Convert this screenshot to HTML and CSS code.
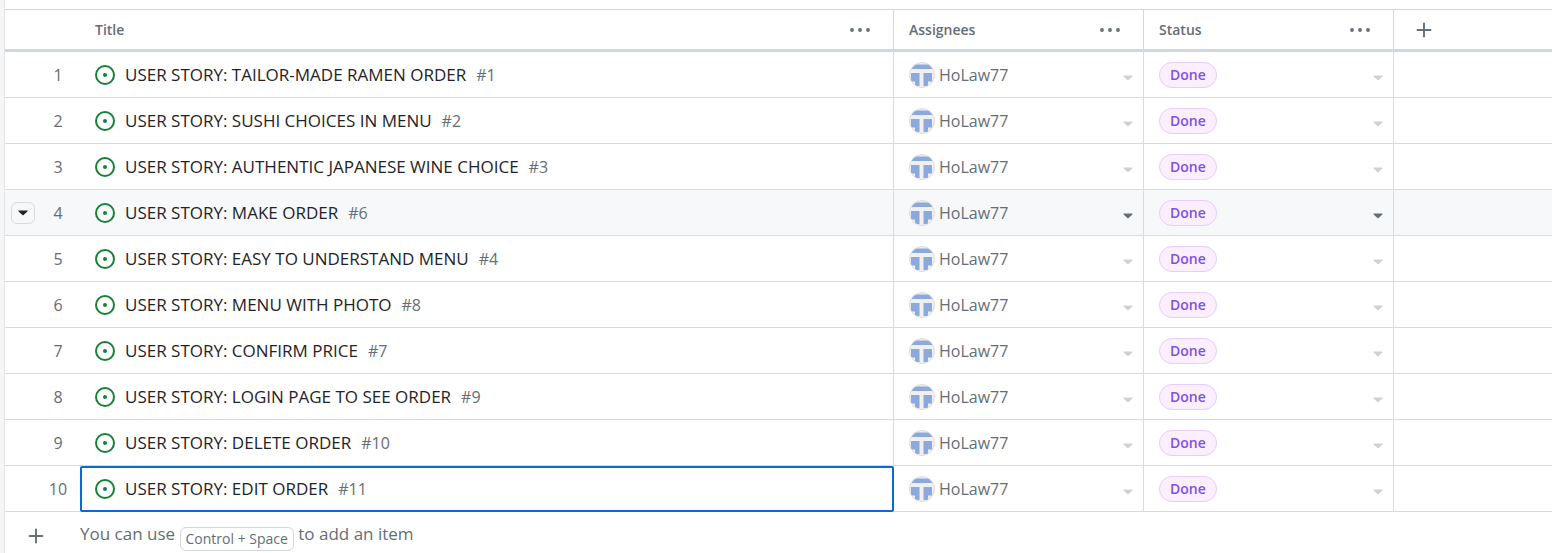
FILE: index.html
```html
<!DOCTYPE html>
<html lang="en">
<head>
<meta charset="utf-8">
<title>Project items</title>
<link rel="stylesheet" href="styles.css">
</head>
<body>
<svg class="sprite" aria-hidden="true">
  <symbol id="open" viewBox="0 0 20 20"><circle cx="10" cy="10" r="9" fill="none" stroke="currentColor" stroke-width="2"/><circle cx="10" cy="10" r="2" fill="currentColor"/></symbol>
  <symbol id="caret" viewBox="0 0 10 6"><path d="M1 .5h8c.6 0 .8.500.4.900L5.600 5c-.4.4-.8.4-1.200 0L.6 1.400C.2 1 .4.500 1 .5z" fill="currentColor"/></symbol>
  <symbol id="dots" viewBox="0 0 20 4"><circle cx="2" cy="2" r="1.900" fill="currentColor"/><circle cx="10" cy="2" r="1.900" fill="currentColor"/><circle cx="18" cy="2" r="1.900" fill="currentColor"/></symbol>
  <symbol id="plus" viewBox="0 0 16 16"><path d="M8 1.500v13M1.500 8h13" stroke="currentColor" stroke-width="1.900" stroke-linecap="round"/></symbol>
  <symbol id="avatar" viewBox="0 0 26 26"><clipPath id="disc"><circle cx="13" cy="13" r="12.500"/></clipPath><g clip-path="url(#disc)"><path d="M0 0h26v26H0z" fill="#f0f0f0"/><path d="M2 2.500h22V7H2zM2 11h8.500v13H6v-4.500H2zM14.500 11H23v8.500h-4V24h-4.500z" fill="#8ba9da"/></g><circle cx="13" cy="13" r="12.500" fill="none" stroke="#dcdddf"/></symbol>
</svg>
<main class="board">
  <table class="grid">
    <colgroup><col class="col-num"><col class="col-title"><col class="col-field"><col class="col-field"><col></colgroup>
    <thead>
      <tr>
        <th class="num" aria-label="Row"></th>
        <th><div class="cell">Title<button class="more" aria-label="Title options"><svg class="dots"><use href="#dots"/></svg></button></div></th>
        <th><div class="cell">Assignees<button class="more" aria-label="Assignees options"><svg class="dots"><use href="#dots"/></svg></button></div></th>
        <th><div class="cell">Status<button class="more" aria-label="Status options"><svg class="dots"><use href="#dots"/></svg></button></div></th>
        <th class="add"><div class="cell"><button aria-label="Add field"><svg class="plus"><use href="#plus"/></svg></button></div></th>
      </tr>
    </thead>
    <tbody>
      <tr>
        <td class="num"><div class="index"><span class="number">1</span></div></td>
        <td><div class="cell"><svg class="open"><use href="#open"/></svg><a href="#1">USER STORY: TAILOR-MADE RAMEN ORDER</a><span class="ref">#1</span></div></td>
        <td><div class="cell"><svg class="avatar"><use href="#avatar"/></svg><span class="name">HoLaw77</span><button class="pick" aria-label="Edit assignees"><svg class="caret"><use href="#caret"/></svg></button></div></td>
        <td><div class="cell"><span class="pill">Done</span><button class="pick" aria-label="Edit status"><svg class="caret"><use href="#caret"/></svg></button></div></td>
        <td></td>
      </tr>
      <tr>
        <td class="num"><div class="index"><span class="number">2</span></div></td>
        <td><div class="cell"><svg class="open"><use href="#open"/></svg><a href="#2">USER STORY: SUSHI CHOICES IN MENU</a><span class="ref">#2</span></div></td>
        <td><div class="cell"><svg class="avatar"><use href="#avatar"/></svg><span class="name">HoLaw77</span><button class="pick" aria-label="Edit assignees"><svg class="caret"><use href="#caret"/></svg></button></div></td>
        <td><div class="cell"><span class="pill">Done</span><button class="pick" aria-label="Edit status"><svg class="caret"><use href="#caret"/></svg></button></div></td>
        <td></td>
      </tr>
      <tr>
        <td class="num"><div class="index"><span class="number">3</span></div></td>
        <td><div class="cell"><svg class="open"><use href="#open"/></svg><a href="#3">USER STORY: AUTHENTIC JAPANESE WINE CHOICE</a><span class="ref">#3</span></div></td>
        <td><div class="cell"><svg class="avatar"><use href="#avatar"/></svg><span class="name">HoLaw77</span><button class="pick" aria-label="Edit assignees"><svg class="caret"><use href="#caret"/></svg></button></div></td>
        <td><div class="cell"><span class="pill">Done</span><button class="pick" aria-label="Edit status"><svg class="caret"><use href="#caret"/></svg></button></div></td>
        <td></td>
      </tr>
      <tr class="hovered">
        <td class="num"><div class="index"><button class="row-menu" aria-label="Row actions"><svg class="caret"><use href="#caret"/></svg></button><span class="number">4</span></div></td>
        <td><div class="cell"><svg class="open"><use href="#open"/></svg><a href="#6">USER STORY: MAKE ORDER</a><span class="ref">#6</span></div></td>
        <td><div class="cell"><svg class="avatar"><use href="#avatar"/></svg><span class="name">HoLaw77</span><button class="pick" aria-label="Edit assignees"><svg class="caret"><use href="#caret"/></svg></button></div></td>
        <td><div class="cell"><span class="pill">Done</span><button class="pick" aria-label="Edit status"><svg class="caret"><use href="#caret"/></svg></button></div></td>
        <td></td>
      </tr>
      <tr>
        <td class="num"><div class="index"><span class="number">5</span></div></td>
        <td><div class="cell"><svg class="open"><use href="#open"/></svg><a href="#4">USER STORY: EASY TO UNDERSTAND MENU</a><span class="ref">#4</span></div></td>
        <td><div class="cell"><svg class="avatar"><use href="#avatar"/></svg><span class="name">HoLaw77</span><button class="pick" aria-label="Edit assignees"><svg class="caret"><use href="#caret"/></svg></button></div></td>
        <td><div class="cell"><span class="pill">Done</span><button class="pick" aria-label="Edit status"><svg class="caret"><use href="#caret"/></svg></button></div></td>
        <td></td>
      </tr>
      <tr>
        <td class="num"><div class="index"><span class="number">6</span></div></td>
        <td><div class="cell"><svg class="open"><use href="#open"/></svg><a href="#8">USER STORY: MENU WITH PHOTO</a><span class="ref">#8</span></div></td>
        <td><div class="cell"><svg class="avatar"><use href="#avatar"/></svg><span class="name">HoLaw77</span><button class="pick" aria-label="Edit assignees"><svg class="caret"><use href="#caret"/></svg></button></div></td>
        <td><div class="cell"><span class="pill">Done</span><button class="pick" aria-label="Edit status"><svg class="caret"><use href="#caret"/></svg></button></div></td>
        <td></td>
      </tr>
      <tr>
        <td class="num"><div class="index"><span class="number">7</span></div></td>
        <td><div class="cell"><svg class="open"><use href="#open"/></svg><a href="#7">USER STORY: CONFIRM PRICE</a><span class="ref">#7</span></div></td>
        <td><div class="cell"><svg class="avatar"><use href="#avatar"/></svg><span class="name">HoLaw77</span><button class="pick" aria-label="Edit assignees"><svg class="caret"><use href="#caret"/></svg></button></div></td>
        <td><div class="cell"><span class="pill">Done</span><button class="pick" aria-label="Edit status"><svg class="caret"><use href="#caret"/></svg></button></div></td>
        <td></td>
      </tr>
      <tr>
        <td class="num"><div class="index"><span class="number">8</span></div></td>
        <td><div class="cell"><svg class="open"><use href="#open"/></svg><a href="#9">USER STORY: LOGIN PAGE TO SEE ORDER</a><span class="ref">#9</span></div></td>
        <td><div class="cell"><svg class="avatar"><use href="#avatar"/></svg><span class="name">HoLaw77</span><button class="pick" aria-label="Edit assignees"><svg class="caret"><use href="#caret"/></svg></button></div></td>
        <td><div class="cell"><span class="pill">Done</span><button class="pick" aria-label="Edit status"><svg class="caret"><use href="#caret"/></svg></button></div></td>
        <td></td>
      </tr>
      <tr>
        <td class="num"><div class="index"><span class="number">9</span></div></td>
        <td><div class="cell"><svg class="open"><use href="#open"/></svg><a href="#10">USER STORY: DELETE ORDER</a><span class="ref">#10</span></div></td>
        <td><div class="cell"><svg class="avatar"><use href="#avatar"/></svg><span class="name">HoLaw77</span><button class="pick" aria-label="Edit assignees"><svg class="caret"><use href="#caret"/></svg></button></div></td>
        <td><div class="cell"><span class="pill">Done</span><button class="pick" aria-label="Edit status"><svg class="caret"><use href="#caret"/></svg></button></div></td>
        <td></td>
      </tr>
      <tr>
        <td class="num"><div class="index"><span class="number">10</span></div></td>
        <td class="selected"><div class="cell"><svg class="open"><use href="#open"/></svg><a href="#11">USER STORY: EDIT ORDER</a><span class="ref">#11</span></div></td>
        <td><div class="cell"><svg class="avatar"><use href="#avatar"/></svg><span class="name">HoLaw77</span><button class="pick" aria-label="Edit assignees"><svg class="caret"><use href="#caret"/></svg></button></div></td>
        <td><div class="cell"><span class="pill">Done</span><button class="pick" aria-label="Edit status"><svg class="caret"><use href="#caret"/></svg></button></div></td>
        <td></td>
      </tr>
    </tbody>
  </table>
  <div class="new-item">
    <button class="new-button" aria-label="Add item"><svg class="plus"><use href="#plus"/></svg></button>
    <p class="hint">You can use <kbd>Control + Space</kbd> to add an item</p>
  </div>
</main>
</body>
</html>
```
FILE: styles.css
```css
* { box-sizing: border-box; }
body {
  margin: 0;
  padding-left: 4px;
  background: #f6f6f6;
  color: #1f2328;
  font-family: "Open Sans", "Noto Sans", sans-serif;
  font-size: 16px;
  line-height: 24px;
}
button {
  display: flex;
  align-items: center;
  justify-content: center;
  padding: 0;
  border: 0;
  background: none;
  color: inherit;
  font: inherit;
}
svg { display: block; flex: none; }
.sprite { position: absolute; width: 0; height: 0; }
.board {
  min-height: 100vh;
  padding-top: 9px;
  border-left: 1px solid #e4e5e7;
  background: #fff;
}
.grid {
  width: 100%;
  table-layout: fixed;
  border-collapse: separate;
  border-spacing: 0;
}
.col-num { width: 75px; }
.col-title { width: 814px; }
.col-field { width: 250px; }
th, td {
  padding: 0;
  border-right: 1px solid #d8dce2;
  border-bottom: 1px solid #d8dce2;
}
th {
  height: 43px;
  border-top: 1px solid #d0d7de;
  border-right-color: #d0d7de;
  border-bottom: 3px solid #d0d7de;
  color: #656d76;
  font-size: 14px;
  font-weight: 600;
}
td { height: 46px; }
.num, th:last-child, td:last-child { border-right: 0; }
.cell {
  display: flex;
  align-items: center;
  padding: 0 15px;
}
td .cell { padding-right: 10px; }
.more { width: 36px; height: 24px; margin-left: auto; }
.dots { width: 20px; height: 4px; }
.plus { width: 16px; height: 16px; }
.add .cell { padding-left: 22px; }
.index {
  display: flex;
  align-items: center;
  justify-content: flex-end;
  padding: 0 10px 0 6px;
  color: #656d76;
}
.number { width: 24px; text-align: center; }
.row-menu {
  width: 24px;
  height: 22px;
  margin-right: auto;
  border: 1px solid #d8dce0;
  border-radius: 6px;
  color: #1f2328;
}
.open { width: 20px; height: 20px; margin-right: 10px; color: #1a7f37; }
.cell a { color: inherit; font-size: 17px; text-decoration: none; }
.ref { margin-left: 10px; color: #656d76; }
.avatar { width: 26px; height: 26px; margin-right: 4px; }
.name { color: #656d76; }
.caret { width: 10px; height: 6px; }
.pick {
  width: 10px;
  height: 24px;
  margin-left: auto;
  padding-top: 6px;
  color: #d0d1d3;
}
.hovered { background: #f6f8fa; }
.hovered .pick { color: #656d76; }
.pill {
  padding: 0 10px;
  border: 1px solid #e6ccff;
  border-radius: 13px;
  background: #fbefff;
  color: #8250df;
  font-size: 14px;
  font-weight: 600;
}
.selected { outline: 2px solid #0969da; outline-offset: -2px; border-radius: 2px; }
.new-item { display: flex; align-items: center; height: 48px; color: #656d76; }
.new-button { width: 75px; padding-right: 14px; }
.hint { margin: 0; font-size: 17px; }
kbd {
  display: inline-block;
  padding: 0 5px;
  border: 1px solid #d0d7de;
  border-radius: 6px;
  font-family: inherit;
  font-size: 14px;
  line-height: 22px;
  vertical-align: -4px;
}
```
